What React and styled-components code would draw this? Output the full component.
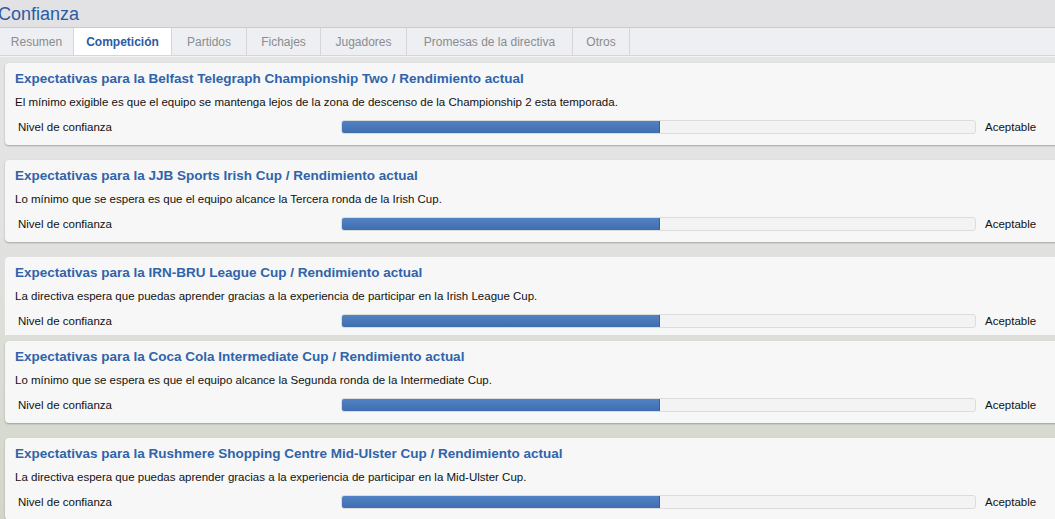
import React from 'react';
import styled, { createGlobalStyle } from 'styled-components';

const GlobalStyle = createGlobalStyle`
  html, body {
    margin: 0;
    padding: 0;
    width: 1055px;
    height: 519px;
    overflow: hidden;
    font-family: "Liberation Sans", Arial, sans-serif;
  }
`;

const Page = styled.div`
  width: 1055px;
  height: 519px;
  overflow: hidden;
  background: linear-gradient(180deg, #e4e4e5 0%, #e3e3e3 40%, #d9dcd4 75%, #d2d6ca 100%);
`;

const Header = styled.div`
  height: 27px;
  background: #e2e2e4;
  display: flex;
  align-items: center;
`;

const Title = styled.h1`
  margin: 0 0 0 -2px;
  font-size: 18px;
  font-weight: normal;
  color: #2a5ba3;
  line-height: 22px;
`;

const TabBar = styled.div`
  height: 27px;
  display: flex;
  background: #edeff2;
  border-top: 1px solid #cbcbcd;
  border-bottom: 1px solid #d6d6d8;
`;

const Tab = styled.div`
  display: flex;
  align-items: center;
  justify-content: center;
  width: ${(p) => p.w}px;
  font-size: 12px;
  color: ${(p) => (p.active ? '#2a5ba3' : '#8a8c90')};
  font-weight: ${(p) => (p.active ? 'bold' : 'normal')};
  background: ${(p) => (p.active ? '#ffffff' : 'transparent')};
  border-right: 1px solid #d6d6d8;
  box-sizing: border-box;
`;

const Content = styled.div`
  padding: 6px 0 0 5px;
  border-top: 1px solid #f4f4f4;
`;

const Card = styled.div`
  background: #f7f7f7;
  margin-right: -20px;
  margin-bottom: ${(p) => (p.clipped ? 6 : 15)}px;
  height: ${(p) => (p.clipped ? 78 : 82)}px;
  overflow: hidden;
  box-sizing: border-box;
  padding: 8px 0 0 10px;
  border-radius: ${(p) => (p.clipped ? '4px 4px 0 0' : '4px')};
  box-shadow: ${(p) => (p.clipped ? 'none' : '0 1px 2px rgba(0, 0, 0, 0.28)')};
`;

const CardTitle = styled.div`
  font-size: 13.5px;
  font-weight: bold;
  color: #2f64aa;
  line-height: 16px;
`;

const Desc = styled.div`
  font-size: 11.5px;
  color: #111;
  line-height: 14px;
  margin-top: 8px;
`;

const Row = styled.div`
  display: grid;
  grid-template-columns: 323px 635px 90px;
  align-items: center;
  margin-top: 11px;
  padding-left: 3px;
  font-size: 11.5px;
  color: #111;
`;

const Bar = styled.div`
  height: 14px;
  box-sizing: border-box;
  border: 1px solid #dcdcdc;
  border-radius: 3px;
  background: #f3f3f3;
  overflow: hidden;
`;

const Fill = styled.div`
  height: 100%;
  background: linear-gradient(180deg, #5182c4 0%, #3f6eae 100%);
  border-right: 1px solid #34609c;
`;

const Value = styled.span`
  padding-left: 9px;
`;

const tabs = [
  ['Resumen', 74],
  ['Competición', 98],
  ['Partidos', 75],
  ['Fichajes', 74],
  ['Jugadores', 86],
  ['Promesas de la directiva', 166],
  ['Otros', 57],
];

const items = [
  {
    title: 'Expectativas para la Belfast Telegraph Championship Two / Rendimiento actual',
    desc: 'El mínimo exigible es que el equipo se mantenga lejos de la zona de descenso de la Championship 2 esta temporada.',
  },
  {
    title: 'Expectativas para la JJB Sports Irish Cup / Rendimiento actual',
    desc: 'Lo mínimo que se espera es que el equipo alcance la Tercera ronda de la Irish Cup.',
  },
  {
    title: 'Expectativas para la IRN-BRU League Cup / Rendimiento actual',
    desc: 'La directiva espera que puedas aprender gracias a la experiencia de participar en la Irish League Cup.',
    clipped: true,
  },
  {
    title: 'Expectativas para la Coca Cola Intermediate Cup / Rendimiento actual',
    desc: 'Lo mínimo que se espera es que el equipo alcance la Segunda ronda de la Intermediate Cup.',
  },
  {
    title: 'Expectativas para la Rushmere Shopping Centre Mid-Ulster Cup / Rendimiento actual',
    desc: 'La directiva espera que puedas aprender gracias a la experiencia de participar en la Mid-Ulster Cup.',
  },
];

const App = () => (
  <Page>
    <GlobalStyle />
    <Header>
      <Title>Confianza</Title>
    </Header>
    <TabBar>
      {tabs.map(([label, w]) => (
        <Tab key={label} w={w} active={label === 'Competición'}>{label}</Tab>
      ))}
    </TabBar>
    <Content>
      {items.map((it) => (
        <Card key={it.title} clipped={it.clipped}>
          <CardTitle>{it.title}</CardTitle>
          <Desc>{it.desc}</Desc>
          <Row>
            <span>Nivel de confianza</span>
            <Bar>
              <Fill style={{ width: '50%' }} />
            </Bar>
            <Value>Aceptable</Value>
          </Row>
        </Card>
      ))}
    </Content>
  </Page>
);

export default App;
